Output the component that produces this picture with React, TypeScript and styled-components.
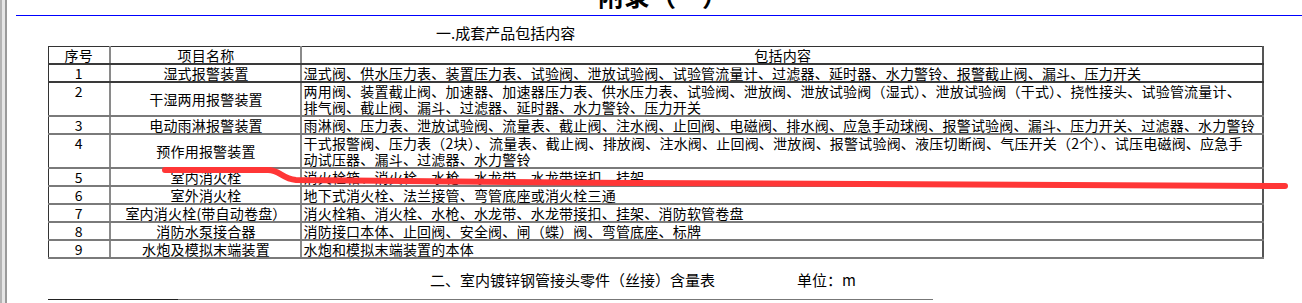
import React from 'react';
import styled, { createGlobalStyle } from 'styled-components';

const GlobalStyle = createGlobalStyle`
  html, body {
    margin: 0;
    padding: 0;
    background: #fff;
  }
  body {
    font-family: "Noto Sans CJK SC", "Liberation Sans", sans-serif;
    color: #000;
    overflow: hidden;
  }
`;

const Page = styled.div`
  position: relative;
  display: flex;
  width: 1302px;
  height: 303px;
  overflow: hidden;
`;

const Rail = styled.div`
  width: 7px;
  flex: none;
  box-sizing: border-box;
  border-left: 2px solid #b4b4b4;
  border-right: 2px solid #9a9a9a;
  background: #e6e6e6;
  margin-right: 9px;
`;

const Sheet = styled.div`
  flex: 1;
  display: flex;
  flex-direction: column;
`;

const Heading = styled.div`
  height: 16px;
  display: flex;
  justify-content: center;
  align-items: flex-end;
  overflow: hidden;
  border-bottom: 1.5px solid #0000ff;
  box-sizing: border-box;
  span {
    font-size: 26px;
    font-weight: 700;
    line-height: 26px;
    margin-bottom: 7px;
    margin-left: 8px;
  }
`;

const Body = styled.div`
  padding-left: 32px;
  display: flex;
  flex-direction: column;
`;

const SectionTitle = styled.div<{ $indent: number }>`
  font-size: 15px;
  line-height: 18px;
  padding-left: ${(p) => p.$indent}px;
  display: flex;
  gap: 82px;
`;

const Table = styled.table`
  border-collapse: collapse;
  width: 1216px;
  table-layout: fixed;
  font-size: 14px;
  letter-spacing: 0.2px;
  border: 1px solid #333;
  border-right: 2px solid #555;
  border-bottom: 2px solid #6a6a6a;
  margin-top: 4px;
`;

const Cell = styled.td<{ $align?: string; $valign?: string; $strong?: boolean }>`
  padding: 0 0 0 2px;
  line-height: 16px;
  text-align: ${(p) => p.$align || 'left'};
  vertical-align: ${(p) => p.$valign || 'top'};
  border-bottom: 2px solid ${(p) => (p.$strong ? '#3a3a3a' : '#7a7a7a')};
  border-left: 2px solid #8a8a8a;
  white-space: nowrap;
  overflow: hidden;
  &:first-child {
    border-left: none;
    padding: 0;
  }
`;

const Line = styled.div`
  white-space: nowrap;
`;

const BottomRule = styled.div`
  margin-top: 10px;
  width: 885px;
  height: 1px;
  background: linear-gradient(to right, #222 0, #222 130px, #777 130px);
`;

const Annotation = styled.svg`
  position: absolute;
  left: 0;
  top: 0;
  pointer-events: none;
`;

type Row = { no: string; name: string; items: string[] };

const rows: Row[] = [
  {
    no: '1',
    name: '湿式报警装置',
    items: ['湿式阀、供水压力表、装置压力表、试验阀、泄放试验阀、试验管流量计、过滤器、延时器、水力警铃、报警截止阀、漏斗、压力开关'],
  },
  {
    no: '2',
    name: '干湿两用报警装置',
    items: [
      '两用阀、装置截止阀、加速器、加速器压力表、供水压力表、试验阀、泄放阀、泄放试验阀（湿式）、泄放试验阀（干式）、挠性接头、试验管流量计、',
      '排气阀、截止阀、漏斗、过滤器、延时器、水力警铃、压力开关',
    ],
  },
  {
    no: '3',
    name: '电动雨淋报警装置',
    items: ['雨淋阀、压力表、泄放试验阀、流量表、截止阀、注水阀、止回阀、电磁阀、排水阀、应急手动球阀、报警试验阀、漏斗、压力开关、过滤器、水力警铃'],
  },
  {
    no: '4',
    name: '预作用报警装置',
    items: [
      '干式报警阀、压力表（2块）、流量表、截止阀、排放阀、注水阀、止回阀、泄放阀、报警试验阀、液压切断阀、气压开关（2个）、试压电磁阀、应急手',
      '动试压器、漏斗、过滤器、水力警铃',
    ],
  },
  { no: '5', name: '室内消火栓', items: ['消火栓箱、消火栓、水枪、水龙带、水龙带接扣、挂架'] },
  { no: '6', name: '室外消火栓', items: ['地下式消火栓、法兰接管、弯管底座或消火栓三通'] },
  {
    no: '7',
    name: '室内消火栓(带自动卷盘）',
    items: ['消火栓箱、消火栓、水枪、水龙带、水龙带接扣、挂架、消防软管卷盘'],
  },
  { no: '8', name: '消防水泵接合器', items: ['消防接口本体、止回阀、安全阀、闸（蝶）阀、弯管底座、标牌'] },
  { no: '9', name: '水炮及模拟末端装置', items: ['水炮和模拟末端装置的本体'] },
];

const App: React.FC = () => {
  return (
    <>
      <GlobalStyle />
      <Page>
        <Rail />
        <Sheet>
          <Heading>
            <span>附录（一）</span>
          </Heading>
          <Body>
            <SectionTitle $indent={388} style={{ marginTop: 8 }}>
              一.成套产品包括内容
            </SectionTitle>
            <Table>
              <colgroup>
                <col style={{ width: 61 }} />
                <col style={{ width: 191 }} />
                <col />
              </colgroup>
              <tbody>
                <tr>
                  <Cell $align="center" $valign="middle" $strong>序号</Cell>
                  <Cell $align="center" $valign="middle" $strong>项目名称</Cell>
                  <Cell $align="center" $valign="middle" $strong>包括内容</Cell>
                </tr>
                {rows.map((r, i) => (
                  <tr key={r.no}>
                    <Cell $align="center" $strong={i === 0}>{r.no}</Cell>
                    <Cell $align="center" $valign="middle" $strong={i === 0}>{r.name}</Cell>
                    <Cell $strong={i === 0}>
                      {r.items.map((t) => (
                        <Line key={t}>{t}</Line>
                      ))}
                    </Cell>
                  </tr>
                ))}
              </tbody>
            </Table>
            <SectionTitle $indent={382} style={{ marginTop: 12 }}>
              <span>二、室内镀锌钢管接头零件（丝接）含量表</span>
              <span>单位：m</span>
            </SectionTitle>
            <BottomRule />
          </Body>
        </Sheet>
        <Annotation width="1302" height="303" viewBox="0 0 1302 303">
          <path
            d="M165 170 L268 170 C280 170 282 179 296 180 L630 183 L1285 186"
            fill="none"
            stroke="#ff3636"
            strokeWidth="6"
            strokeLinecap="round"
            strokeLinejoin="round"
          />
        </Annotation>
      </Page>
    </>
  );
};

export default App;
